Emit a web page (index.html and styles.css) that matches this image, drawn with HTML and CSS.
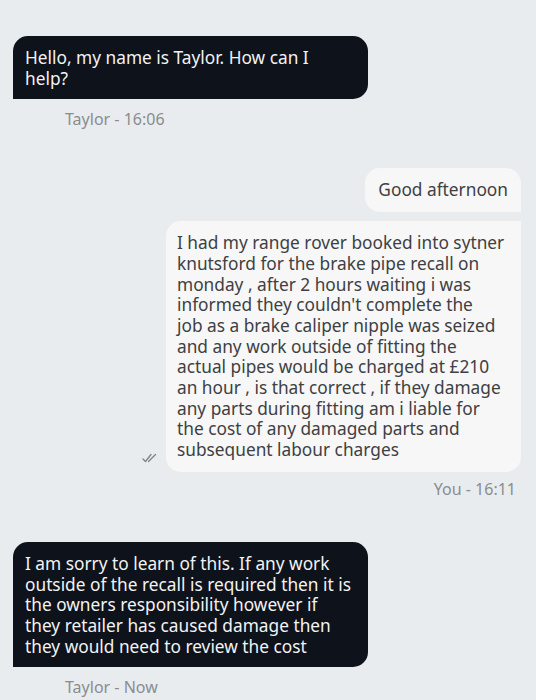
FILE: index.html
```html
<!DOCTYPE html>
<html lang="en">
<head>
  <meta charset="UTF-8" />
  <meta name="viewport" content="width=device-width, initial-scale=1.0"/>
  <title>Chat</title>
  <link rel="stylesheet" href="styles.css">
</head>
<body>

<div class="chat">
  <!-- Agent -->
  <div class="msg in">
    <div class="bubble dark">Hello, my name is Taylor. How can I help?</div>
    <div class="meta">Taylor - 16:06</div>
  </div>

  <!-- Customer -->
  <div class="msg out">
    <div class="bubble light first">Good afternoon</div>
    <div class="row">
      <svg class="ticks" width="16" height="10" viewBox="0 0 16 10">
        <path d="M1 6 L3.5 8.5 L9 1.5" fill="none" stroke="#7d8185" stroke-width="1.3" stroke-linecap="round" stroke-linejoin="round"/>
        <path d="M6.5 8.5 L13.5 1.5" fill="none" stroke="#7d8185" stroke-width="1.3" stroke-linecap="round"/>
      </svg>
      <div class="bubble light last">I had my range rover booked into sytner knutsford for the brake pipe recall on monday , after 2 hours waiting i was informed they couldn't complete the<br>job as a brake caliper nipple was seized and any work outside of fitting the actual pipes would be charged at £210 an hour , is that correct , if they damage any parts during fitting am i liable for the cost of any damaged parts and subsequent labour charges</div>
    </div>
    <div class="meta">You - 16:11</div>
  </div>

  <!-- Agent -->
  <div class="msg in">
    <div class="bubble dark">I am sorry to learn of this. If any work outside of the recall is required then it is the owners responsibility however if they retailer has caused damage then they would need to review the cost</div>
    <div class="meta">Taylor - Now</div>
  </div>
</div>

</body>
</html>
```

FILE: styles.css
```css
* { box-sizing: border-box; }
body {
  margin: 0;
  font-family: "Noto Sans", "Open Sans", sans-serif;
  background-color: #e9ecee;
}

.chat {
  padding: 36px 15px 0 13px;
}

.msg {
  display: flex;
  flex-direction: column;
}

.msg.in + .msg.out { margin-top: 38px; }
.msg.out + .msg.in { margin-top: 42px; }

.msg.in { align-items: flex-start; }
.msg.out { align-items: flex-end; }

.bubble {
  max-width: 355px;
  font-size: 17.3px;
  line-height: 20.7px;
  border-radius: 15px;
}

.bubble.dark {
  background: #0e121a;
  color: #f2f3f4;
  padding: 12px 13px 10px 12px;
  border-bottom-left-radius: 0;
}

.bubble.light {
  background: #f6f7f6;
  color: #3e4043;
  padding: 12px 14px 11px 11px;
}

.bubble.first {
  padding: 12px 13px 11px 13px;
  border-bottom-right-radius: 0;
}

.bubble.last { border-top-right-radius: 0; }

.row {
  display: flex;
  align-items: flex-end;
  gap: 8px;
  margin-top: 9px;
}

.ticks { margin-bottom: 9px; }

.meta {
  font-size: 16px;
  line-height: 21px;
  color: #8a8d90;
}

.msg.in .meta { margin: 10px 0 0 52px; }
.msg.out .meta { margin: 7px 5px 0 0; }
```
